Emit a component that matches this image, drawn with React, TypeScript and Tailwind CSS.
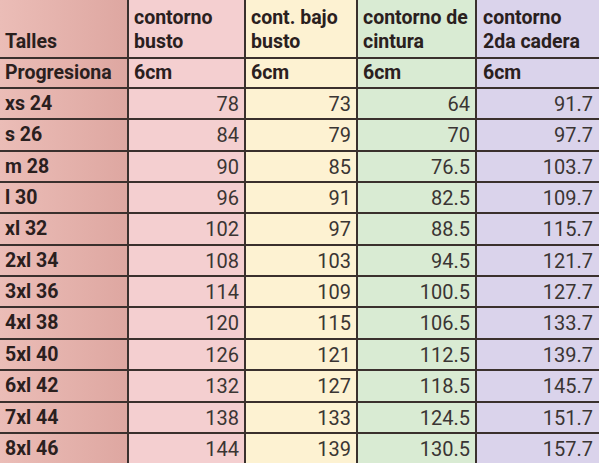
import React from "react";

const rows: [string, string, string, string, string, string][] = [
  ["xs 24", "78", "73", "64", "91.7", "h-[31px]"],
  ["s 26", "84", "79", "70", "97.7", "h-[32px]"],
  ["m 28", "90", "85", "76.5", "103.7", "h-[31px]"],
  ["l 30", "96", "91", "82.5", "109.7", "h-[31px]"],
  ["xl 32", "102", "97", "88.5", "115.7", "h-[32px]"],
  ["2xl 34", "108", "103", "94.5", "121.7", "h-[31px]"],
  ["3xl 36", "114", "109", "100.5", "127.7", "h-[31px]"],
  ["4xl 38", "120", "115", "106.5", "133.7", "h-[32px]"],
  ["5xl 40", "126", "121", "112.5", "139.7", "h-[31px]"],
  ["6xl 42", "132", "127", "118.5", "145.7", "h-[32px]"],
  ["7xl 44", "138", "133", "124.5", "151.7", "h-[31px]"],
  ["8xl 46", "144", "139", "130.5", "157.7", "h-[31px]"],
];

const c1 = "w-[129px] shrink-0 border-r-2 border-[#3a302d] bg-gradient-to-r from-[#ebbdb7] to-[#dea7a1] pl-[5px] font-bold text-[#2a201e]";
const c2 = "w-[117px] shrink-0 border-r-2 border-[#3a302d] bg-[#f4cfd0] px-[5px]";
const c3 = "w-[112px] shrink-0 border-r-2 border-[#3a302d] bg-[#fdf2d2] px-[5px]";
const c4 = "w-[119px] shrink-0 border-r-2 border-[#3a302d] bg-[#d9ebd3] px-[5px]";
const c5 = "flex-1 bg-[#dad3eb] px-[6px]";

export default function App() {
  return (
    <div
      className="w-[599px] h-[463px] overflow-hidden bg-white text-[#2a201e]"
      style={{ fontFamily: "Roboto, 'Noto Sans', sans-serif" }}
    >
      <div className="flex h-[59px] border-b-2 border-[#3a302d] text-[19.5px] leading-[24px] font-bold">
        <div className={`${c1} flex items-end pb-[3px]`}>Talles</div>
        <div className={`${c2} flex items-end pb-[3px]`}>contorno<br />busto</div>
        <div className={`${c3} flex items-end pb-[3px]`}>cont. bajo<br />busto</div>
        <div className={`${c4} flex items-end pb-[3px]`}>contorno de<br />cintura</div>
        <div className={`${c5} flex items-end pb-[3px]`}>contorno<br />2da cadera</div>
      </div>
      <div className="flex h-[30px] border-b-2 border-[#3a302d] text-[19.5px] font-bold">
        <div className={`${c1} flex items-center`}>Progresiona</div>
        <div className={`${c2} flex items-center`}>6cm</div>
        <div className={`${c3} flex items-center`}>6cm</div>
        <div className={`${c4} flex items-center`}>6cm</div>
        <div className={`${c5} flex items-center`}>6cm</div>
      </div>
      {rows.map((r) => (
        <div key={r[0]} className={`flex ${r[5]} border-b-2 border-[#3a302d] text-[20px]`}>
          <div className={`${c1} flex items-center text-[19.5px]`}>{r[0]}</div>
          <div className={`${c2} flex items-center justify-end text-[#3a3533]`}>{r[1]}</div>
          <div className={`${c3} flex items-center justify-end text-[#3a3533]`}>{r[2]}</div>
          <div className={`${c4} flex items-center justify-end text-[#3a3533]`}>{r[3]}</div>
          <div className={`${c5} flex items-center justify-end text-[#3a3533]`}>{r[4]}</div>
        </div>
      ))}
    </div>
  );
}
